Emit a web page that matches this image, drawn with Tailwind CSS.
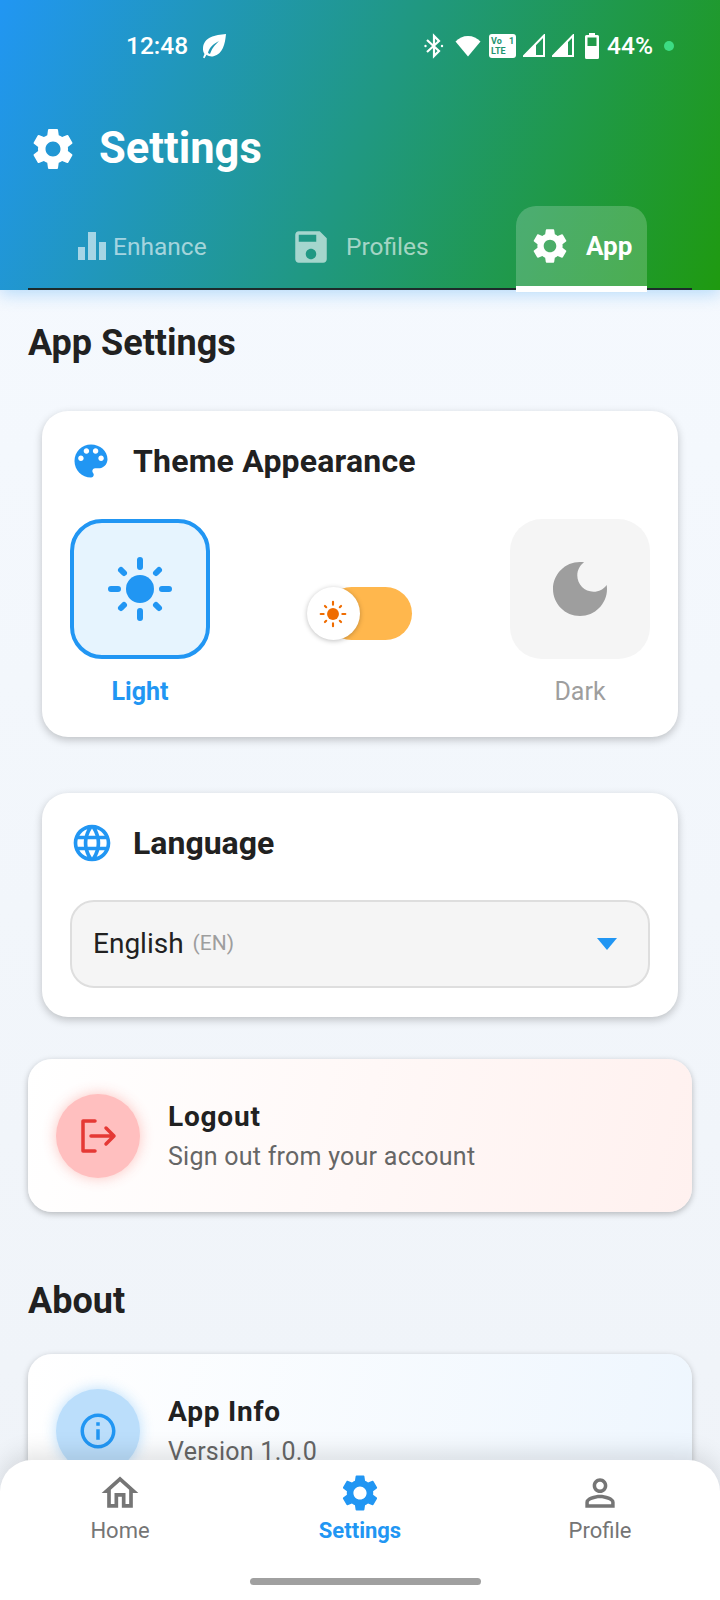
<!DOCTYPE html>
<html lang="en">
<head>
  <meta charset="UTF-8" />
  <meta name="viewport" content="width=device-width, initial-scale=1.0"/>
  <title>Settings</title>
  <script src="https://cdn.jsdelivr.net/npm/@tailwindcss/browser@4"></script>
</head>
<body class="font-[Roboto,sans-serif]">
<div class="relative w-[720px] h-[1600px] overflow-hidden bg-gradient-to-b from-[#f6faff] to-[#eff3f8] text-[#212121]">

  <!-- header -->
  <header class="relative z-10 h-[290px] bg-[linear-gradient(112deg,#2196f3,#1f9a10)] shadow-[0_4px_16px_rgba(33,150,243,0.3)] text-white">
    <div class="flex items-center h-[30px] translate-y-[31px]">
      <span class="ml-[126px] text-[24.500px] font-medium leading-[30px]">12:48</span>
      <svg class="ml-[13px] w-[26px] h-[26px]" viewBox="0 0 26 26" fill="#fff"><path d="M25 1C14 2 3 4 2 15c-.2 2.500.5 4.500 1.500 6L2 24.500l1.500.7 2-3.500c2 1.500 4.500 2 7 1.500C22 21 24 11 25 1zM7 20c1-5 5-9 11-12-4 4-7 7-9 13z"/></svg>
      <div class="ml-auto mr-[46px] flex items-center">
        <svg class="w-[20px] h-[26px]" viewBox="0 0 20 26" fill="none" stroke="#fff" stroke-width="2.200"><path d="M3 7l12 11-5 5V3l5 5L3 19"/><circle cx="1.500" cy="13" r="1.200" fill="#fff" stroke="none"/><circle cx="18" cy="13" r="1.200" fill="#fff" stroke="none"/></svg>
        <svg class="ml-[11px] w-[26px] h-[22px]" viewBox="0 0 26 22" fill="#fff"><path d="M13 21.500L0.500 6.500C4 3 8 1 13 1s9 2 12.500 5.500z"/></svg>
        <div class="ml-[8px] w-[27px] h-[24px] bg-white rounded-[3px] flex flex-col justify-center px-[2px] text-[9px] leading-[10px] font-bold text-[#1f9470]">
          <div class="flex justify-between"><span>Vo</span><span>1</span></div>
          <span>LTE</span>
        </div>
        <svg class="ml-[7px] w-[22px] h-[24px]" viewBox="0 0 22 24" fill="none"><path d="M21 1.500V22H1z" stroke="#fff" stroke-width="2"/><path d="M1 22L13 10V22z" fill="#fff"/></svg>
        <svg class="ml-[7px] w-[22px] h-[24px]" viewBox="0 0 22 24" fill="none"><path d="M21 1.500V22H1z" stroke="#fff" stroke-width="2"/><path d="M1 22L16 7V22z" fill="#fff"/></svg>
        <svg class="ml-[11px] w-[14px] h-[26px]" viewBox="0 0 14 26" fill="#fff"><path d="M4 0h6v2h2.500A1.500 1.500 0 0 1 14 3.500v21a1.500 1.500 0 0 1-1.500 1.500h-11A1.500 1.500 0 0 1 0 24.500v-21A1.500 1.500 0 0 1 1.500 2H4z"/><rect x="2.500" y="4.500" width="9" height="8.500" fill="#219a4a"/></svg>
        <span class="ml-[8px] text-[24.500px] font-medium leading-[30px]">44%</span>
        <span class="ml-[11px] w-[10px] h-[10px] rounded-full bg-[#3ddc84]"></span>
      </div>
    </div>

    <div class="flex items-center pl-[28px] pt-[94px]">
      <svg class="w-[50px] h-[50px]" viewBox="0 0 24 24" fill="#fff"><path d="M19.140 12.940c.04-.3.06-.61.06-.94 0-.32-.02-.64-.07-.94l2.030-1.580a.49.49 0 0 0 .12-.61l-1.920-3.320a.488.488 0 0 0-.59-.22l-2.390.96c-.5-.38-1.030-.7-1.620-.94l-.36-2.540a.484.484 0 0 0-.48-.41h-3.840c-.24 0-.43.17-.47.41l-.36 2.540c-.59.24-1.130.57-1.620.94l-2.390-.96c-.22-.08-.47 0-.59.22L2.740 8.870c-.12.21-.08.47.12.61l2.030 1.580c-.05.3-.09.63-.09.94s.02.64.07.94l-2.030 1.580a.49.49 0 0 0-.12.61l1.920 3.320c.12.22.37.29.59.22l2.390-.96c.5.38 1.030.7 1.620.94l.36 2.540c.05.24.24.41.48.41h3.840c.24 0 .44-.17.47-.41l.36-2.540c.59-.24 1.130-.56 1.620-.94l2.390.96c.22.08.47 0 .59-.22l1.920-3.320c.12-.22.07-.47-.12-.61l-2.010-1.580zM12 15.600c-1.980 0-3.600-1.620-3.600-3.600s1.620-3.600 3.600-3.600 3.600 1.620 3.600 3.600-1.620 3.600-3.600 3.600z"/></svg>
      <h1 class="ml-[21px] text-[43.500px] font-bold leading-[50px]">Settings</h1>
    </div>

    <!-- tabs -->
    <nav class="absolute left-[28px] right-[28px] bottom-0 h-[84px] border-b-2 border-[#1d2b2b]">
      <div class="absolute left-[50px] top-0 h-[82px] flex items-center text-white/60 text-[24.500px]">
        <svg class="w-[28px] h-[28px] mt-[-2px]" viewBox="0 0 28 28" fill="currentColor"><path d="M0 15h7v13H0zM10 0h8v28h-8zM21 10h7v18h-7z"/></svg>
        <span class="ml-[7px]">Enhance</span>
      </div>
      <div class="absolute left-[262px] top-0 h-[82px] flex items-center text-white/60 text-[24.500px]">
        <svg class="w-[42px] h-[42px]" viewBox="0 0 24 24" fill="currentColor"><path d="M17 3H5c-1.110 0-2 .9-2 2v14c0 1.100.89 2 2 2h14c1.100 0 2-.9 2-2V7l-4-4zm-5 16c-1.660 0-3-1.340-3-3s1.340-3 3-3 3 1.340 3 3-1.340 3-3 3zm3-10H5V5h10v4z"/></svg>
        <span class="ml-[14px]">Profiles</span>
      </div>
      <div class="absolute left-[488px] top-0 w-[131px] h-[86px] bg-white/20 rounded-t-[20px] border-b-[6px] border-white flex items-center pl-[13px] text-[26px] font-bold">
        <svg class="w-[42px] h-[42px]" viewBox="0 0 24 24" fill="#fff"><path d="M19.140 12.940c.04-.3.06-.61.06-.94 0-.32-.02-.64-.07-.94l2.030-1.580a.49.49 0 0 0 .12-.61l-1.920-3.320a.488.488 0 0 0-.59-.22l-2.390.96c-.5-.38-1.030-.7-1.620-.94l-.36-2.540a.484.484 0 0 0-.48-.41h-3.840c-.24 0-.43.17-.47.41l-.36 2.540c-.59.24-1.130.57-1.620.94l-2.390-.96c-.22-.08-.47 0-.59.22L2.740 8.870c-.12.21-.08.47.12.61l2.030 1.580c-.05.3-.09.63-.09.94s.02.64.07.94l-2.030 1.580a.49.49 0 0 0-.12.61l1.920 3.320c.12.22.37.29.59.22l2.390-.96c.5.38 1.030.7 1.620.94l.36 2.540c.05.24.24.41.48.41h3.840c.24 0 .44-.17.47-.41l.36-2.540c.59-.24 1.130-.56 1.620-.94l2.390.96c.22.08.47 0 .59-.22l1.920-3.320c.12-.22.07-.47-.12-.61l-2.010-1.580zM12 15.600c-1.980 0-3.600-1.620-3.600-3.600s1.620-3.600 3.600-3.600 3.600 1.620 3.600 3.600-1.620 3.600-3.600 3.600z"/></svg>
        <span class="ml-[15px]">App</span>
      </div>
    </nav>
  </header>

  <main class="px-[28px]">
    <h2 class="mt-[33px] h-[40px] text-[36px] font-bold leading-[40px]">App Settings</h2>

    <!-- theme card -->
    <section class="mt-[48px] mx-[14px] h-[326px] bg-white rounded-[26px] shadow-[0_3px_8px_rgba(0,0,0,0.22)] px-[28px] pt-[30px]">
      <div class="flex items-center h-[40px]">
        <svg class="w-[44px] h-[44px] ml-[-1px]" viewBox="0 0 24 24" fill="#2196f3"><path d="M12 3c-4.970 0-9 4.030-9 9s4.030 9 9 9c.83 0 1.500-.67 1.500-1.500 0-.39-.15-.74-.39-1.010-.23-.26-.38-.61-.38-.99 0-.83.67-1.500 1.500-1.500H16c2.760 0 5-2.240 5-5 0-4.420-4.030-8-9-8zm-5.500 9c-.83 0-1.500-.67-1.500-1.500S5.670 9 6.500 9 8 9.670 8 10.500 7.330 12 6.500 12zm3-4C8.670 8 8 7.330 8 6.500S8.670 5 9.500 5s1.500.67 1.500 1.500S10.330 8 9.500 8zm5 0c-.83 0-1.500-.67-1.500-1.500S13.670 5 14.500 5s1.500.67 1.500 1.500S15.330 8 14.500 8zm3 4c-.83 0-1.500-.67-1.500-1.500S16.670 9 17.500 9s1.500.67 1.500 1.500-.67 1.500-1.500 1.500z"/></svg>
        <h3 class="ml-[20px] text-[32px] font-bold leading-[40px] tracking-[0.2px]">Theme Appearance</h3>
      </div>

      <div class="mt-[38px] flex justify-between">
        <div class="flex flex-col items-center w-[140px]">
          <div class="w-[140px] h-[140px] rounded-[32px] border-4 border-[#2196f3] bg-[#e6f4fe] flex items-center justify-center">
            <svg class="w-[66px] h-[66px]" viewBox="0 0 66 66" fill="#2196f3" stroke="#2196f3" stroke-width="6" stroke-linecap="round"><circle cx="33" cy="33" r="14" stroke="none"/><path d="M33 4v7M33 55v7M4 33h7M55 33h7M14 14l3 3M49 49l3 3M14 52l3-3M49 17l3-3" fill="none"/></svg>
          </div>
          <span class="mt-[19px] text-[25px] font-bold leading-[28px] text-[#2196f3]">Light</span>
        </div>

        <div class="relative mt-[68px] ml-[-2px] w-[105px] h-[53px]">
          <div class="absolute left-[18px] right-0 top-0 bottom-0 rounded-full bg-[#ffb74d]"></div>
          <div class="absolute left-0 top-0 w-[53px] h-[53px] rounded-full bg-white shadow-[0_1px_5px_rgba(0,0,0,0.25)] flex items-center justify-center">
            <svg class="w-[28px] h-[28px]" viewBox="0 0 66 66" fill="#ef6c00" stroke="#ef6c00" stroke-width="5" stroke-linecap="round"><circle cx="33" cy="33" r="14" stroke="none"/><path d="M33 4v7M33 55v7M4 33h7M55 33h7M14 14l3 3M49 49l3 3M14 52l3-3M49 17l3-3" fill="none"/></svg>
          </div>
        </div>

        <div class="flex flex-col items-center w-[140px]">
          <div class="w-[140px] h-[140px] rounded-[32px] bg-[#f5f5f5] flex items-center justify-center">
            <svg class="w-[72px] h-[72px]" viewBox="0 0 24 24" fill="#9e9e9e"><path d="M12 3c-4.970 0-9 4.030-9 9s4.030 9 9 9 9-4.030 9-9c0-.46-.04-.92-.1-1.360-.98 1.370-2.580 2.260-4.400 2.260-2.980 0-5.400-2.420-5.400-5.400 0-1.810.89-3.420 2.260-4.400-.44-.06-.9-.1-1.360-.1z"/></svg>
          </div>
          <span class="mt-[19px] text-[25px] leading-[28px] text-[#9e9e9e]">Dark</span>
        </div>
      </div>
    </section>

    <!-- language card -->
    <section class="mt-[56px] mx-[14px] h-[224px] bg-white rounded-[26px] shadow-[0_3px_8px_rgba(0,0,0,0.22)] px-[28px] pt-[30px]">
      <div class="flex items-center h-[40px]">
        <svg class="w-[44px] h-[44px]" viewBox="0 0 24 24" fill="#2196f3"><path d="M11.990 2C6.470 2 2 6.480 2 12s4.470 10 9.990 10C17.520 22 22 17.520 22 12S17.520 2 11.990 2zm6.930 6h-2.950c-.32-1.250-.78-2.450-1.380-3.560 1.840.63 3.370 1.910 4.330 3.560zM12 4.040c.83 1.200 1.480 2.530 1.910 3.960h-3.820c.43-1.430 1.080-2.760 1.910-3.960zM4.260 14C4.100 13.360 4 12.690 4 12s.1-1.360.26-2h3.380c-.08.66-.14 1.320-.14 2 0 .68.06 1.340.14 2H4.260zm.82 2h2.950c.32 1.250.78 2.450 1.380 3.560-1.840-.63-3.370-1.900-4.330-3.560zm2.950-8H5.080c.96-1.660 2.490-2.930 4.330-3.560C8.810 5.550 8.350 6.750 8.030 8zM12 19.960c-.83-1.200-1.480-2.530-1.910-3.960h3.820c-.43 1.430-1.080 2.760-1.910 3.960zM14.340 14H9.660c-.09-.66-.16-1.320-.16-2 0-.68.07-1.350.16-2h4.680c.09.65.16 1.320.16 2 0 .68-.07 1.340-.16 2zm.25 5.560c.6-1.110 1.060-2.310 1.380-3.560h2.950c-.96 1.650-2.490 2.930-4.330 3.560zM16.360 14c.08-.66.14-1.320.14-2 0-.68-.06-1.340-.14-2h3.380c.16.64.26 1.310.26 2s-.1 1.360-.26 2h-3.380z"/></svg>
        <h3 class="ml-[19px] text-[32px] font-bold leading-[40px]">Language</h3>
      </div>
      <div class="mt-[37px] h-[88px] rounded-[24px] border-2 border-[#dedede] bg-[#f5f5f5] flex items-center pl-[21px] pr-[31px]">
        <span class="text-[28px]">English</span>
        <span class="ml-[9px] text-[21px] text-[#9e9e9e]">(EN)</span>
        <svg class="ml-auto w-[20px] h-[12px]" viewBox="0 0 20 12" fill="#2196f3"><path d="M0 0h20L10 12z"/></svg>
      </div>
    </section>

    <!-- logout -->
    <section class="mt-[42px] h-[153px] rounded-[24px] bg-[linear-gradient(103deg,#fff,#fff1ef)] shadow-[0_2px_6px_rgba(0,0,0,0.25)] flex items-center pl-[28px]">
      <div class="w-[84px] h-[84px] rounded-full bg-[#ffbfbf] shadow-[0_0_14px_rgba(244,67,54,0.3)] flex items-center justify-center">
        <svg class="w-[40px] h-[40px]" viewBox="0 0 40 40" fill="none" stroke="#e53935" stroke-width="3.500" stroke-linecap="round" stroke-linejoin="round"><path d="M17 5H5v30h12M13 20h23M28 12l8 8-8 8"/></svg>
      </div>
      <div class="ml-[28px]">
        <div class="text-[28px] font-bold leading-[34px] tracking-[0.8px]">Logout</div>
        <div class="mt-[8px] text-[25px] leading-[30px] text-[#666] tracking-[0.25px]">Sign out from your account</div>
      </div>
    </section>

    <h2 class="mt-[69px] h-[40px] text-[36px] font-bold leading-[40px]">About</h2>

    <!-- about -->
    <section class="mt-[33px] h-[153px] rounded-[24px] bg-[linear-gradient(103deg,#fff,#eef6fe)] shadow-[0_2px_6px_rgba(0,0,0,0.25)] flex items-center pl-[28px]">
      <div class="w-[84px] h-[84px] rounded-full bg-[#bbdefb] shadow-[0_0_14px_rgba(33,150,243,0.3)] flex items-center justify-center">
        <svg class="w-[42px] h-[42px]" viewBox="0 0 24 24" fill="#2196f3"><path d="M11 7h2v2h-2zm0 4h2v6h-2zm1-9C6.480 2 2 6.480 2 12s4.480 10 10 10 10-4.480 10-10S17.520 2 12 2zm0 18c-4.410 0-8-3.590-8-8s3.590-8 8-8 8 3.590 8 8-3.590 8-8 8z"/></svg>
      </div>
      <div class="ml-[28px]">
        <div class="text-[28px] font-bold leading-[34px] tracking-[0.8px]">App Info</div>
        <div class="mt-[8px] text-[25px] leading-[30px] text-[#666] tracking-[0.25px]">Version 1.0.0</div>
      </div>
    </section>
  </main>

  <!-- bottom nav -->
  <nav class="absolute left-0 right-0 bottom-0 h-[140px] bg-white rounded-t-[32px] shadow-[0_-6px_24px_rgba(0,0,0,0.12)]">
    <div class="grid grid-cols-3 pt-[11px]">
      <div class="flex flex-col items-center text-[#757575]">
        <svg class="w-[44px] h-[44px]" viewBox="0 0 24 24" fill="currentColor"><path d="M12 5.690l5 4.500V18h-2v-6H9v6H7v-7.810l5-4.500M12 3L2 12h3v8h6v-6h2v6h6v-8h3L12 3z"/></svg>
        <span class="mt-[3px] text-[22px] leading-[26px]">Home</span>
      </div>
      <div class="flex flex-col items-center text-[#2196f3]">
        <svg class="w-[44px] h-[44px]" viewBox="0 0 24 24" fill="currentColor"><path d="M19.140 12.940c.04-.3.06-.61.06-.94 0-.32-.02-.64-.07-.94l2.030-1.580a.49.49 0 0 0 .12-.61l-1.920-3.320a.488.488 0 0 0-.59-.22l-2.390.96c-.5-.38-1.030-.7-1.620-.94l-.36-2.540a.484.484 0 0 0-.48-.41h-3.840c-.24 0-.43.17-.47.41l-.36 2.540c-.59.24-1.130.57-1.620.94l-2.390-.96c-.22-.08-.47 0-.59.22L2.740 8.870c-.12.21-.08.47.12.61l2.030 1.580c-.05.3-.09.63-.09.94s.02.64.07.94l-2.030 1.580a.49.49 0 0 0-.12.61l1.920 3.320c.12.22.37.29.59.22l2.390-.96c.5.38 1.030.7 1.620.94l.36 2.540c.05.24.24.41.48.41h3.840c.24 0 .44-.17.47-.41l.36-2.540c.59-.24 1.130-.56 1.620-.94l2.390.96c.22.08.47 0 .59-.22l1.920-3.320c.12-.22.07-.47-.12-.61l-2.010-1.580zM12 15.600c-1.980 0-3.600-1.620-3.600-3.600s1.620-3.600 3.600-3.600 3.600 1.620 3.600 3.600-1.620 3.600-3.600 3.600z"/></svg>
        <span class="mt-[3px] text-[22px] font-bold leading-[26px]">Settings</span>
      </div>
      <div class="flex flex-col items-center text-[#757575]">
        <svg class="w-[44px] h-[44px]" viewBox="0 0 24 24" fill="currentColor"><path d="M12 5.900c1.160 0 2.100.94 2.100 2.100s-.94 2.100-2.100 2.100S9.900 9.160 9.900 8s.94-2.100 2.100-2.100m0 9c2.970 0 6.100 1.460 6.100 2.100v1.100H5.900V17c0-.64 3.130-2.100 6.100-2.100M12 4C9.790 4 8 5.790 8 8s1.790 4 4 4 4-1.790 4-4-1.790-4-4-4zm0 9c-2.670 0-8 1.340-8 4v3h16v-3c0-2.660-5.330-4-8-4z"/></svg>
        <span class="mt-[3px] text-[22px] leading-[26px]">Profile</span>
      </div>
    </div>
    <div class="absolute left-[250px] bottom-[15px] w-[231px] h-[7px] rounded-full bg-[#a0a0a0]"></div>
  </nav>
</div>
</body>
</html>
